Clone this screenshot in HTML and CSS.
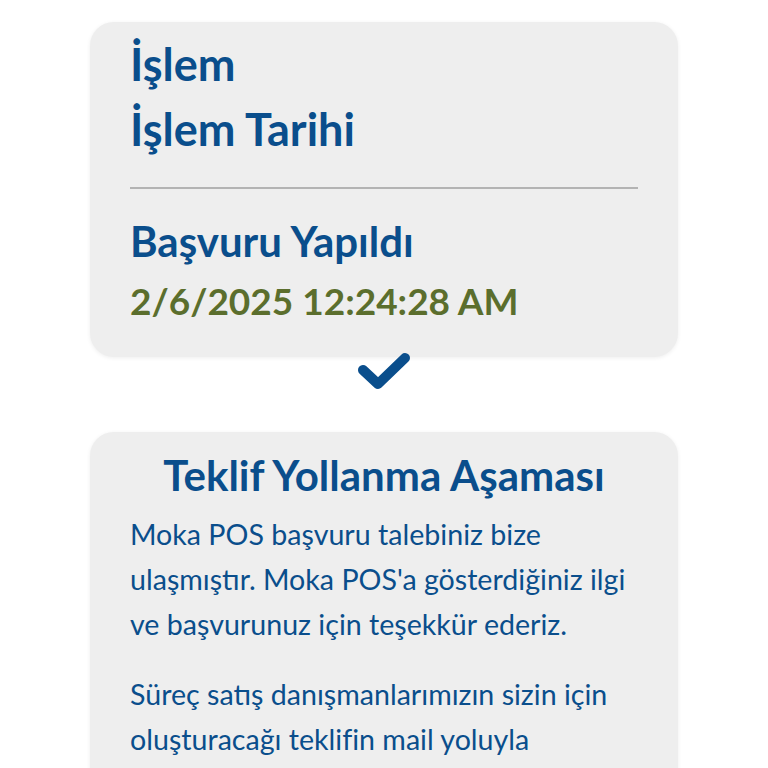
FILE: index.html
```html
<!DOCTYPE html>
<html lang="tr">
<head>
<meta charset="utf-8">
<link rel="stylesheet" href="styles.css">
</head>
<body>
<main class="page">
  <section class="card status-card">
    <div class="label">İşlem</div>
    <div class="label">İşlem Tarihi</div>
    <hr class="divider">
    <div class="step-name">Başvuru Yapıldı</div>
    <div class="step-date">2/6/2025 12:24:28 AM</div>
  </section>
  <div class="check">
    <svg width="56" height="42" viewBox="0 0 56 42">
      <polyline points="7,20 22,34 49,8" fill="none" stroke="#0a4e8c" stroke-width="10" stroke-linecap="round" stroke-linejoin="round"/>
    </svg>
  </div>
  <section class="card info-card">
    <h2 class="info-title">Teklif Yollanma Aşaması</h2>
    <p class="info-text">Moka POS başvuru talebiniz bize ulaşmıştır. Moka POS'a gösterdiğiniz ilgi ve başvurunuz için teşekkür ederiz.</p>
    <p class="info-text">Süreç satış danışmanlarımızın sizin için oluşturacağı teklifin mail yoluyla tarafınıza iletilmesiyle devam edecektir.</p>
  </section>
</main>
</body>
</html>
```
FILE: styles.css
```css
html, body {
  margin: 0;
  padding: 0;
  background: #ffffff;
}
body {
  font-family: Lato, "Open Sans", sans-serif;
  color: #0a4e8c;
}
.page {
  padding: 22px 90px 0 90px;
  display: flex;
  flex-direction: column;
}
.card {
  background: #eeeeee;
  border-radius: 24px;
  box-shadow: 0 1px 4px rgba(0, 0, 0, 0.07);
  padding: 10px 40px 26px 40px;
}
.label {
  font-size: 45px;
  font-weight: 700;
  line-height: 65px;
}
.divider {
  border: none;
  height: 2px;
  background: #b3b3b3;
  margin: 25px 0 22px 0;
}
.step-name {
  font-size: 42px;
  font-weight: 700;
  line-height: 60px;
}
.step-date {
  font-size: 37px;
  font-weight: 700;
  line-height: 60px;
  color: #5b6e2d;
}
.check {
  display: flex;
  justify-content: center;
  margin-top: -7px;
  margin-bottom: 40px;
  position: relative;
}
.info-card {
  padding: 18px 40px 30px 40px;
}
.info-title {
  margin: 0 0 12px 0;
  text-align: center;
  font-size: 42px;
  font-weight: 700;
  line-height: 50px;
}
.info-text {
  margin: 0 0 25px 0;
  font-size: 28.6px;
  line-height: 45px;
}
```
